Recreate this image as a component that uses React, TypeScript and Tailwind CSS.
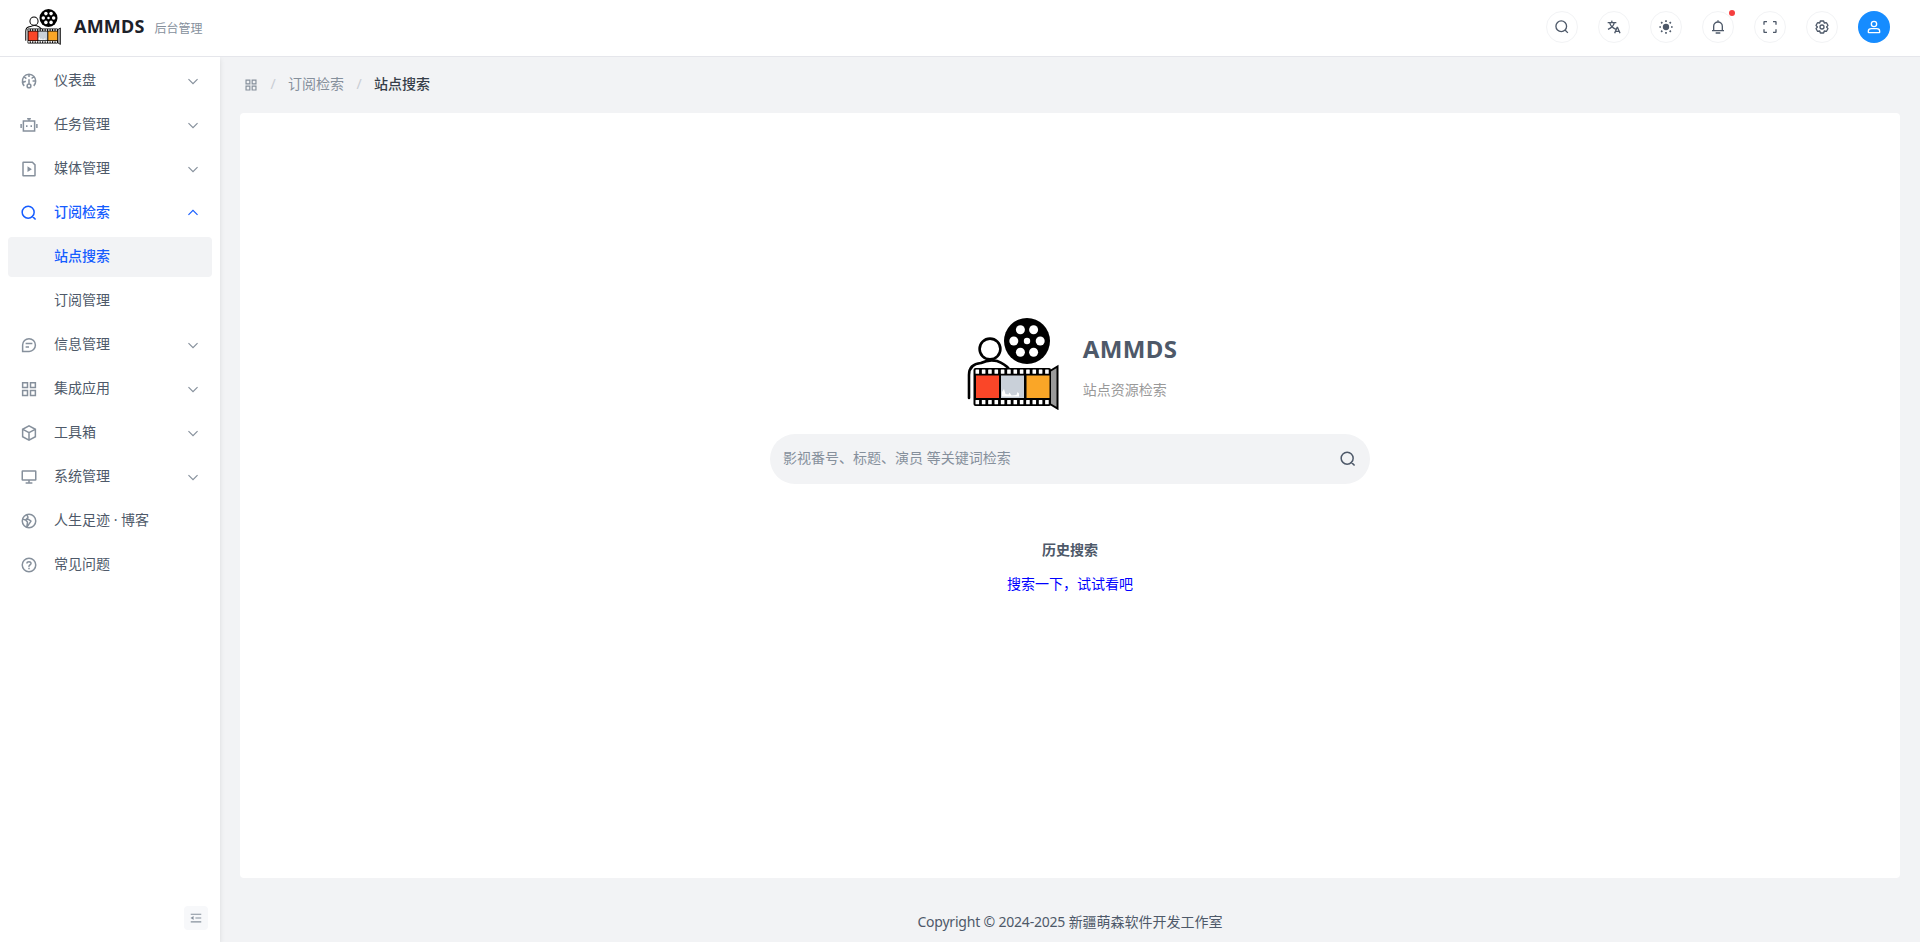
import React from 'react';

type IconProps = { className?: string; children: React.ReactNode };

function Icon({ className = 'size-[18px]', children }: IconProps) {
  return (
    <svg viewBox="0 0 48 48" fill="none" stroke="currentColor" strokeWidth="4" className={`shrink-0 ${className}`}>
      {children}
    </svg>
  );
}

const searchPath = (
  <path d="M33.072 33.071c6.248-6.248 6.248-16.379 0-22.627-6.249-6.249-16.38-6.249-22.628 0-6.248 6.248-6.248 16.379 0 22.627 6.248 6.248 16.38 6.248 22.628 0Zm0 0 8.485 8.485" />
);
const appsPath = <path d="M7 7h13v13H7zM28 7h13v13H28zM7 28h13v13H7zM28 28h13v13H28z" />;
const ring = <path d="M42 24c0 9.941-8.059 18-18 18S6 33.941 6 24 14.059 6 24 6s18 8.059 18 18Z" />;

const dashboard = (
  <>
    <path d="M41.808 24c.118 4.63-1.486 9.333-5.21 13m5.21-13h-8.309m8.309 0c-.112-4.38-1.767-8.694-4.627-12M24 6c5.531 0 10.07 2.404 13.18 6M24 6c-5.724 0-10.384 2.574-13.5 6.38M24 6v7.5M37.18 12 31 17.5m-20.5-5.12L17 17.5m-6.5-5.12C6.99 16.662 5.44 22.508 6.53 28m4.872 9c-2.65-2.609-4.226-5.742-4.873-9m0 0 8.97-3.5" />
    <path d="M24 32a5 5 0 1 0 0 10 5 5 0 0 0 0-10Zm0 0V19" />
  </>
);
const robot = <path d="M24 7v6m-5-6h10M9 13h30v27H9zM3 21v11M45 21v11M18 24.500v4.500M30 24.500v4.500" />;
const media = (
  <>
    <path d="M39 42H9a1 1 0 0 1-1-1V7a1 1 0 0 1 1-1h24l7 7v28a1 1 0 0 1-1 1Z" />
    <path d="M22 28.500v-8l6 4-6 4Z" fill="currentColor" />
  </>
);
const message = <path d="M15 20h18m-18 9h9M7 41h17.63C33.67 41 41 33.67 41 24.63V24c0-9.389-7.611-17-17-17S7 14.611 7 24v17Z" />;
const cube = <path d="M24 23 7.652 14.345M24 23l16.366-8.664M24 23v19.438M7 14v20l17 9 17-9V14L24 5 7 14Z" />;
const desktop = <path d="M24 32v8m0 0h-9m9 0h9M7 32h34a1 1 0 0 0 1-1V9a1 1 0 0 0-1-1H7a1 1 0 0 0-1 1v22a1 1 0 0 0 1 1Z" />;
const globe = (
  <>
    <path d="M15 21.5 6.704 19M15 21.5l4.683 5.152a1 1 0 0 1 .25.814L18 40.976l10.918-16.117a1 1 0 0 0-.298-1.409L21.5 19 15 21.5Zm0 0 6.062-6.995a1 1 0 0 0 .138-1.103L18 7.024" />
    {ring}
  </>
);
const question = (
  <>
    {ring}
    <path d="M24.006 31v4.008m0-6.008L24 28c0-3 3-4 4.78-6.402C30.558 19.195 28.288 15 23.987 15c-4.014 0-5.382 2.548-5.388 4.514v.465" />
  </>
);
const language = (
  <path d="m42 43-2.385-6M26 43l2.384-6m11.231 0-.795-2-4.18-10h-1.28l-4.181 10-.795 2m11.231 0h-11.23M17 5l1 5M5 11h26M11 11s1.889 7.826 6.611 12.174C22.333 27.522 30 31 30 31M25 11s-1.889 7.826-6.611 12.174C13.667 27.522 6 31 6 31" />
);
const sun = (
  <>
    <circle cx="24" cy="24" r="9.500" fill="currentColor" stroke="none" />
    <path d="M24 4v5M24 39v5M4 24h5M39 24h5M9.500 9.500l3.500 3.500M35 35l3.500 3.500M9.500 38.500l3.500-3.500M35 13l3.500-3.500" strokeWidth="5" />
  </>
);
const bell = <path d="M24 9c7.18 0 13 5.82 13 13v13H11V22c0-7.18 5.82-13 13-13Zm0 0V4M6 35h36m-25 7h14" />;
const fullscreen = <path d="M42 17V9a1 1 0 0 0-1-1h-8M6 17V9a1 1 0 0 1 1-1h8m27 23v8a1 1 0 0 1-1 1h-8M6 31v8a1 1 0 0 0 1 1h8" />;
const gear = (
  <path d="M18.797 6.732A1 1 0 0 1 19.76 6h8.48a1 1 0 0 1 .964.732l1.285 4.628a1 1 0 0 0 1.213.7l4.651-1.2a1 1 0 0 1 1.116.468l4.24 7.344a1 1 0 0 1-.153 1.2L38.193 23.3a1 1 0 0 0 0 1.402l3.364 3.427a1 1 0 0 1 .153 1.2l-4.24 7.344a1 1 0 0 1-1.116.468l-4.65-1.2a1 1 0 0 0-1.214.7l-1.285 4.628a1 1 0 0 1-.964.732h-8.48a1 1 0 0 1-.963-.732L17.51 36.64a1 1 0 0 0-1.213-.7l-4.65 1.2a1 1 0 0 1-1.116-.468l-4.24-7.344a1 1 0 0 1 .153-1.2L9.809 24.7a1 1 0 0 0 0-1.402l-3.364-3.427a1 1 0 0 1-.153-1.2l4.24-7.344a1 1 0 0 1 1.116-.468l4.65 1.2a1 1 0 0 0 1.213-.7l1.286-4.628ZM30 24a6 6 0 1 1-12 0 6 6 0 0 1 12 0Z" />
);
const user = (
  <>
    <path d="M7 37c0-4.97 4.03-8 9-8h16c4.97 0 9 3.03 9 8v3a1 1 0 0 1-1 1H8a1 1 0 0 1-1-1v-3Z" />
    <circle cx="24" cy="15" r="8" />
  </>
);

function Logo({ className }: { className: string }) {
  const holes = Array.from({ length: 12 }, (_, i) => 10.2 + i * 6.33);
  return (
    <svg viewBox="0 0 92 92" className={`shrink-0 ${className}`}>
      <path d="M2 80V57Q2 46 14 45Q22 41 30 43Q38 46 42 51" fill="none" stroke="#000" strokeWidth="2.6" strokeLinecap="round" />
      <circle cx="23" cy="31" r="10.4" fill="#fff" stroke="#000" strokeWidth="2.6" />
      <circle cx="60" cy="23" r="23" fill="#000" />
      <g fill="#fff">
        <circle cx="60" cy="23" r="3.2" />
        <circle cx="53.4" cy="11.8" r="4.5" />
        <circle cx="66.6" cy="11.8" r="4.5" />
        <circle cx="46.8" cy="23" r="4.5" />
        <circle cx="73.2" cy="23" r="4.5" />
        <circle cx="53.4" cy="34.2" r="4.5" />
        <circle cx="66.6" cy="34.2" r="4.5" />
      </g>
      <path d="M83 53l7.5-4.5v42L83 86Z" fill="#9a9a9a" stroke="#000" strokeWidth="2" />
      <rect x="6.500" y="50" width="77.500" height="38" rx="2" fill="#000" />
      <g fill="#fff">
        {holes.map((x) => (
          <React.Fragment key={x}>
            <rect x={x - 1.7} y="51.500" width="3.600" height="4.200" rx=".5" />
            <rect x={x - 1.7} y="82" width="3.600" height="4.200" rx=".5" />
          </React.Fragment>
        ))}
      </g>
      <rect x="9" y="57.500" width="23" height="22.500" fill="#fa4628" />
      <rect x="34" y="57.500" width="23" height="22.500" fill="#c9d0d9" />
      <rect x="59.500" y="57.500" width="23" height="22.500" fill="#faa627" />
      <path d="M35 78.500v-4.500l2-3 1.500 5 3 .5 1-2 2 3 5-.5 1-3 1.500 1.500v3Z" fill="#fff" />
    </svg>
  );
}

type Item = { label: string; icon?: React.ReactNode; arrow?: 'down' | 'up'; selected?: boolean };

const menu: Item[] = [
  { label: '仪表盘', icon: dashboard, arrow: 'down' },
  { label: '任务管理', icon: robot, arrow: 'down' },
  { label: '媒体管理', icon: media, arrow: 'down' },
  { label: '订阅检索', icon: searchPath, arrow: 'up' },
  { label: '站点搜索', selected: true },
  { label: '订阅管理' },
  { label: '信息管理', icon: message, arrow: 'down' },
  { label: '集成应用', icon: appsPath, arrow: 'down' },
  { label: '工具箱', icon: cube, arrow: 'down' },
  { label: '系统管理', icon: desktop, arrow: 'down' },
  { label: '人生足迹 · 博客', icon: globe },
  { label: '常见问题', icon: question },
];

function MenuItem({ label, icon, arrow, selected }: Item) {
  const open = arrow === 'up';
  const textColor = open || selected ? 'font-medium text-[#165dff]' : 'text-[#4e5969]';
  return (
    <div className={`flex h-10 items-center rounded-sm px-3 ${selected ? 'bg-[#f2f3f5]' : ''}`}>
      <span className={`flex w-[34px] ${open ? 'text-[#165dff]' : 'text-[#86909c]'}`}>{icon && <Icon>{icon}</Icon>}</span>
      <span className={`flex-1 pb-0.5 ${textColor}`}>{label}</span>
      {arrow && (
        <Icon className={`size-3.5 ${open ? 'rotate-180 text-[#165dff]' : 'text-[#86909c]'}`}>
          <path d="M39.6 17.443 24.043 33 8.487 17.443" />
        </Icon>
      )}
    </div>
  );
}

const tools = [searchPath, language, sun, bell, fullscreen, gear];

export default function App() {
  return (
    <div className="flex h-[942px] w-full flex-col overflow-hidden bg-[#f2f3f5] font-['Noto_Sans','Noto_Sans_CJK_SC',sans-serif] text-sm leading-[22px] text-[#4e5969]">
      <header className="flex h-[57px] shrink-0 items-start justify-between border-b border-[#e5e6eb] bg-white pr-[30px] pl-[25px]">
        <div className="flex h-[54px] items-center">
          <Logo className="size-9" />
          <h1 className="ml-[13px] pb-0.5 text-lg font-bold tracking-[0.2px] text-[#1d2129]">AMMDS</h1>
          <span className="mt-1 ml-2.5 text-xs text-[#86909c]">后台管理</span>
        </div>
        <div className="flex h-[54px] items-center gap-5">
          {tools.map((tool, i) => (
            <button key={i} className="relative flex size-8 items-center justify-center rounded-full border border-[#f2f3f5]">
              <Icon className="size-4">{tool}</Icon>
              {i === 3 && <span className="absolute -top-0.5 -right-0.5 size-1.5 rounded-full bg-[#f53f3f]" />}
            </button>
          ))}
          <button className="flex size-8 items-center justify-center rounded-full bg-[#168cff] text-white">
            <Icon className="size-4">{user}</Icon>
          </button>
        </div>
      </header>
      <div className="flex min-h-0 flex-1">
        <aside className="z-10 flex w-[220px] shrink-0 flex-col justify-between bg-white shadow-[0_2px_5px_rgba(0,0,0,0.1)] [clip-path:inset(0_-8px_0_0)]">
          <nav className="flex flex-col gap-1 px-2 pt-1">
            {menu.map((item) => (
              <MenuItem key={item.label} {...item} />
            ))}
          </nav>
          <button className="mr-3 mb-3 flex size-6 items-center justify-center self-end rounded-sm bg-[#f7f8fa] text-[#86909c]">
            <Icon className="size-3.5">
              <path d="M42 11H6M42 24H22M42 37H6M13.66 26.912l-4.82-3.118 4.82-3.118v6.236Z" />
            </Icon>
          </button>
        </aside>
        <div className="flex flex-1 flex-col px-5">
          <div className="flex h-14 shrink-0 items-center pl-1">
            <Icon className="size-3.5 text-[#86909c]">{appsPath}</Icon>
            <span className="w-[30px] pb-0.5 text-center text-[#c9cdd4]">/</span>
            <span className="pb-0.5 text-[#86909c]">订阅检索</span>
            <span className="w-[30px] pb-0.5 text-center text-[#c9cdd4]">/</span>
            <span className="pb-0.5 font-medium text-[#363e49]">站点搜索</span>
          </div>
          <main className="flex h-[765px] shrink-0 flex-col items-center rounded bg-white pt-[204px]">
            <div className="flex h-[93px] items-center pl-1">
              <Logo className="size-[92px]" />
              <div className="mt-1.5 ml-6 flex flex-col gap-3.5">
                <h2 className="text-2xl leading-8 font-bold tracking-[0.4px]">AMMDS</h2>
                <p className="text-[#999999]">站点资源检索</p>
              </div>
            </div>
            <div className="mt-6 flex h-[50px] w-[600px] items-center justify-between rounded-full bg-[#f2f3f5] px-[13px]">
              <span className="pb-0.5 text-[#86909c]">影视番号、标题、演员 等关键词检索</span>
              <Icon className="size-[18px]">{searchPath}</Icon>
            </div>
            <h3 className="mt-[55px] font-bold">历史搜索</h3>
            <a className="mt-3 text-[#0000ff]">搜索一下，试试看吧</a>
          </main>
          <footer className="flex flex-1 items-center justify-center pt-6">
            <span className="tracking-[-0.2px]">Copyright © 2024-2025&nbsp;</span>
            <span>新疆萌森软件开发工作室</span>
          </footer>
        </div>
      </div>
    </div>
  );
}
